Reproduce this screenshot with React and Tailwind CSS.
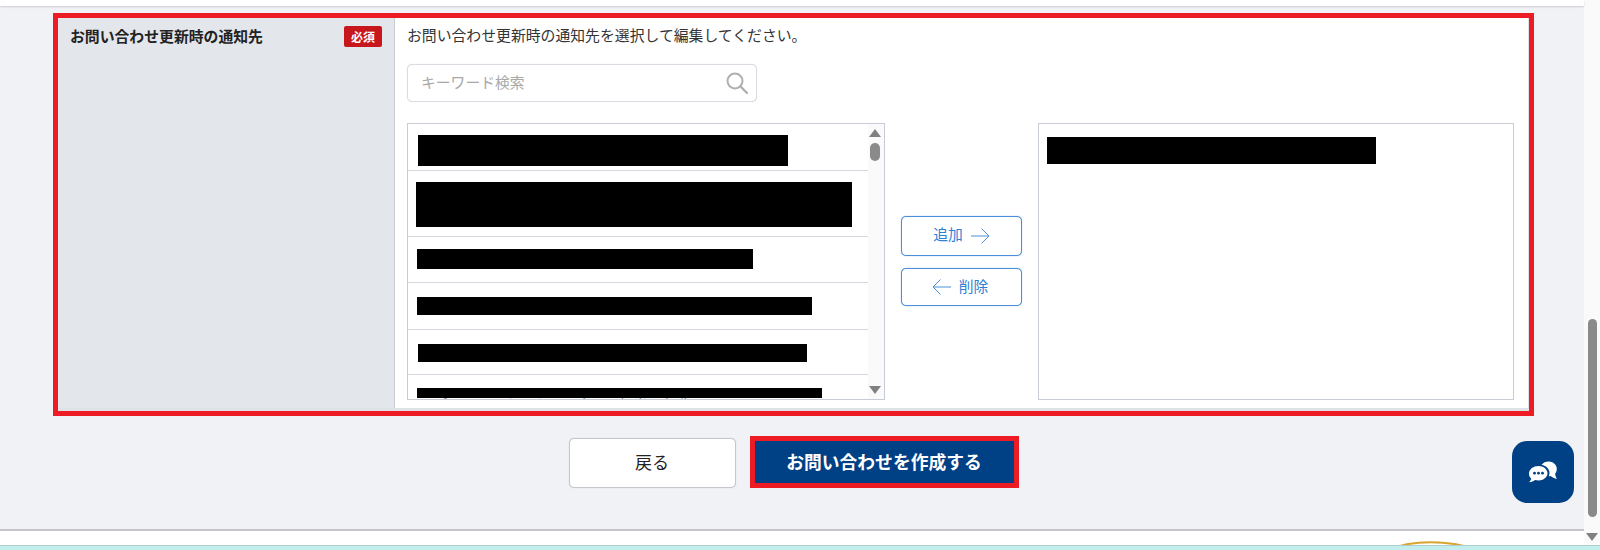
const jp = "font-['Meiryo','Noto_Sans_CJK_JP','Noto_Sans_JP',sans-serif]";

function ListScrollbar() {
  return (
    <div className="w-[16px] shrink-0 bg-[#fafafa] flex flex-col items-center pt-[5px] pb-[5px] pr-[2px]">
      <div className="w-0 h-0 border-x-[6px] border-x-transparent border-b-[8px] border-b-[#808080]" />
      <div className="w-[10px] h-[18px] rounded-full bg-[#8a8a8a] mt-[6px]" />
      <div className="w-0 h-0 border-x-[6px] border-x-transparent border-t-[8px] border-t-[#808080] mt-auto" />
    </div>
  );
}

function SearchIcon() {
  return (
    <svg width="22" height="22" viewBox="0 0 22 22" fill="none" stroke="#b0b0b0" strokeWidth="2">
      <circle cx="9" cy="9" r="7.500" />
      <path d="M14.500 14.500l6.500 6.500" strokeWidth="2.400" strokeLinecap="round" />
    </svg>
  );
}

function ChatIcon() {
  return (
    <svg width="30" height="22" viewBox="0 0 30 22">
      <path d="M20.500 .5c4.700 0 8.300 3.200 8.300 7.500 0 1.800-.6 3.400-1.700 4.700.2 1.800.9 3.700 1.900 5.300-2.500-.5-4.700-1.600-6.300-3-.7.1-1.400.2-2.200.2-4.600 0-8.300-3.200-8.300-7.200S15.900.5 20.500.5z" fill="#fff" />
      <ellipse cx="10.500" cy="12.200" rx="11" ry="9" fill="#004085" />
      <path d="M10.500 5c5 0 9 3.200 9 7.200s-4 7.200-9 7.200c-1.200 0-2.300-.2-3.300-.5-1.600 1.200-3.600 2-6.200 2.300 1.200-1 2-2.200 2.200-3.700C1.700 16.500 1 14.500 1 12.200 1 8.200 5.500 5 10.500 5z" fill="#fff" />
      <circle cx="6.500" cy="12.200" r="1.400" fill="#004085" />
      <circle cx="10.500" cy="12.200" r="1.400" fill="#004085" />
      <circle cx="14.500" cy="12.200" r="1.400" fill="#004085" />
    </svg>
  );
}

export default function App() {
  return (
    <div className={`w-[1600px] h-[550px] overflow-hidden flex flex-col bg-white text-[#333] ${jp}`}>
      <div className="flex flex-1 min-h-0">
        <main className="relative w-[1584px] flex flex-col bg-[#f1f2f6]">
          <div className="h-[6px] bg-white shadow-[0_1px_2px_rgba(0,0,0,0.15)]" />

          <div className="w-[1481px] ml-[53px] mt-[7px]">
            <div className="border-[5px] border-[#ed1c24]">
              <div className="flex bg-white border-r border-b-[3px] border-[#dfe2e6]">
                <div className="w-[337px] shrink-0 bg-[#e3e6eb] border-r border-[#c8ccd4] pl-[12px] pr-[12px] pt-[7px] flex items-start justify-between">
                  <span className="text-[14.85px] leading-[22px] font-bold text-[#222]">お問い合わせ更新時の通知先</span>
                  <span className="mt-[1px] w-[38px] h-[21px] rounded-[2px] bg-[#c8161d] text-white text-[12px] leading-[21px] font-bold text-center">必須</span>
                </div>

                <div className="flex-1 pl-[12px] pr-[14px] pt-[6px] pb-[8px]">
                  <p className="text-[14.85px] leading-[21px]">お問い合わせ更新時の通知先を選択して編集してください。</p>

                  <div className="mt-[19px] w-[350px] h-[38px] rounded-[5px] border border-[#d9dce2] shadow-[0_0_1px_#d9dce2] bg-white pl-[13px] pr-[8px] flex items-center justify-between">
                    <span className="mb-[2px] text-[14.8px] text-[#a8a8a8]">キーワード検索</span>
                    <SearchIcon />
                  </div>

                  <div className="mt-[21px] flex h-[277px]">
                    <div className="w-[478px] shrink-0 border border-[#c8ccd4] flex overflow-hidden">
                      <ul className="flex-1 min-w-0">
                        <li className="h-[47px] border-b border-[#d5d8de] pt-[11px] pl-[10px]"><div className="w-[370px] h-[31px] bg-black" /></li>
                        <li className="h-[66px] border-b border-[#d5d8de] pt-[11px] pl-[8px]"><div className="w-[436px] h-[45px] bg-black" /></li>
                        <li className="h-[46px] border-b border-[#d5d8de] pt-[12px] pl-[9px]"><div className="w-[336px] h-[20px] bg-black" /></li>
                        <li className="h-[47px] border-b border-[#d5d8de] pt-[14px] pl-[9px]"><div className="w-[395px] h-[18px] bg-black" /></li>
                        <li className="h-[45px] border-b border-[#d5d8de] pt-[14px] pl-[10px]"><div className="w-[389px] h-[18px] bg-black" /></li>
                        <li className="pt-[13px] pl-[9px]">
                          <div className="relative w-[405px] h-[10px] bg-black" />
                          <p className="-mt-[4px] pl-[3px] text-[14px] leading-[20px] text-[#777] whitespace-nowrap">サポートセンター お問い合わせ担当 通知先メールアドレス</p>
                        </li>
                      </ul>
                      <ListScrollbar />
                    </div>

                    <div className="w-[121px] shrink-0 mx-[16px] pb-[1px] flex flex-col justify-center gap-[12px] text-[#2f7fd4] text-[14.8px]">
                      <button className="h-[40px] rounded-[5px] border border-[#4a90d9] shadow-[0_0_1px_#4a90d9] bg-white flex items-center justify-center gap-[8px]">
                        <span className="mb-[4px]">追加</span>
                        <svg width="19" height="18" viewBox="0 0 19 18" fill="none" stroke="#4a90d9"><path d="M0 9h18M10.500 1.500L18 9l-7.500 7.500" /></svg>
                      </button>
                      <button className="h-[38px] rounded-[5px] border border-[#4a90d9] shadow-[0_0_1px_#4a90d9] bg-white flex items-center justify-center gap-[8px] pr-[3px]">
                        <svg width="19" height="18" viewBox="0 0 19 18" fill="none" stroke="#4a90d9"><path d="M19 9H1M8.500 1.500L1 9l7.500 7.500" /></svg>
                        <span className="mb-[2px]">削除</span>
                      </button>
                    </div>

                    <div className="flex-1 border border-[#c8ccd4] pt-[13px] pl-[8px]">
                      <div className="w-[329px] h-[27px] bg-black" />
                    </div>
                  </div>
                </div>
              </div>
            </div>

            <div className="mt-[20px] flex justify-center items-end gap-[14px]">
              <button className="w-[167px] h-[50px] rounded-[5px] border border-[#c5c7cc] shadow-[0_0_1px_#c5c7cc] bg-white text-[17px] text-[#222] pb-[3px]">戻る</button>
              <button className="w-[269px] h-[52px] border-[5px] border-[#ed1c24] bg-[#004085] text-white text-[17.8px] font-bold pb-[2px]">お問い合わせを作成する</button>
            </div>
          </div>

          <footer className="mt-auto h-[16px] bg-white border-t-2 border-[#c4c6cc] flex justify-between overflow-hidden">
            <span className="ml-[30px] mt-[10px] text-[14px] leading-[20px] text-[#2f7fe0] whitespace-nowrap">お問い合わせ・ご利用ガイド・プライバシーポリシー・利用規約・特定商取引法に基づく表記</span>
            <svg className="mr-[119px] mt-[9px]" width="66" height="6" viewBox="0 0 66 6" fill="none">
              <path d="M1 6C18 1 44 1 65 6" stroke="#d9a531" strokeWidth="2" />
            </svg>
          </footer>

          <button className="absolute right-[10px] bottom-[42px] w-[62px] h-[62px] rounded-[15px] bg-[#004085] flex items-center justify-center">
            <ChatIcon />
          </button>
        </main>

        <div className="w-[16px] bg-[#fafafa] flex flex-col items-center pt-[319px]">
          <div className="w-[9px] h-[198px] rounded-full bg-[#8a8a8a]" />
          <div className="mt-[16px] w-0 h-0 border-x-[6px] border-x-transparent border-t-[8px] border-t-[#808080]" />
        </div>
      </div>

      <div className="h-[5px] bg-[#c3eeee] border-t border-[#aecfcf]" />
    </div>
  );
}
